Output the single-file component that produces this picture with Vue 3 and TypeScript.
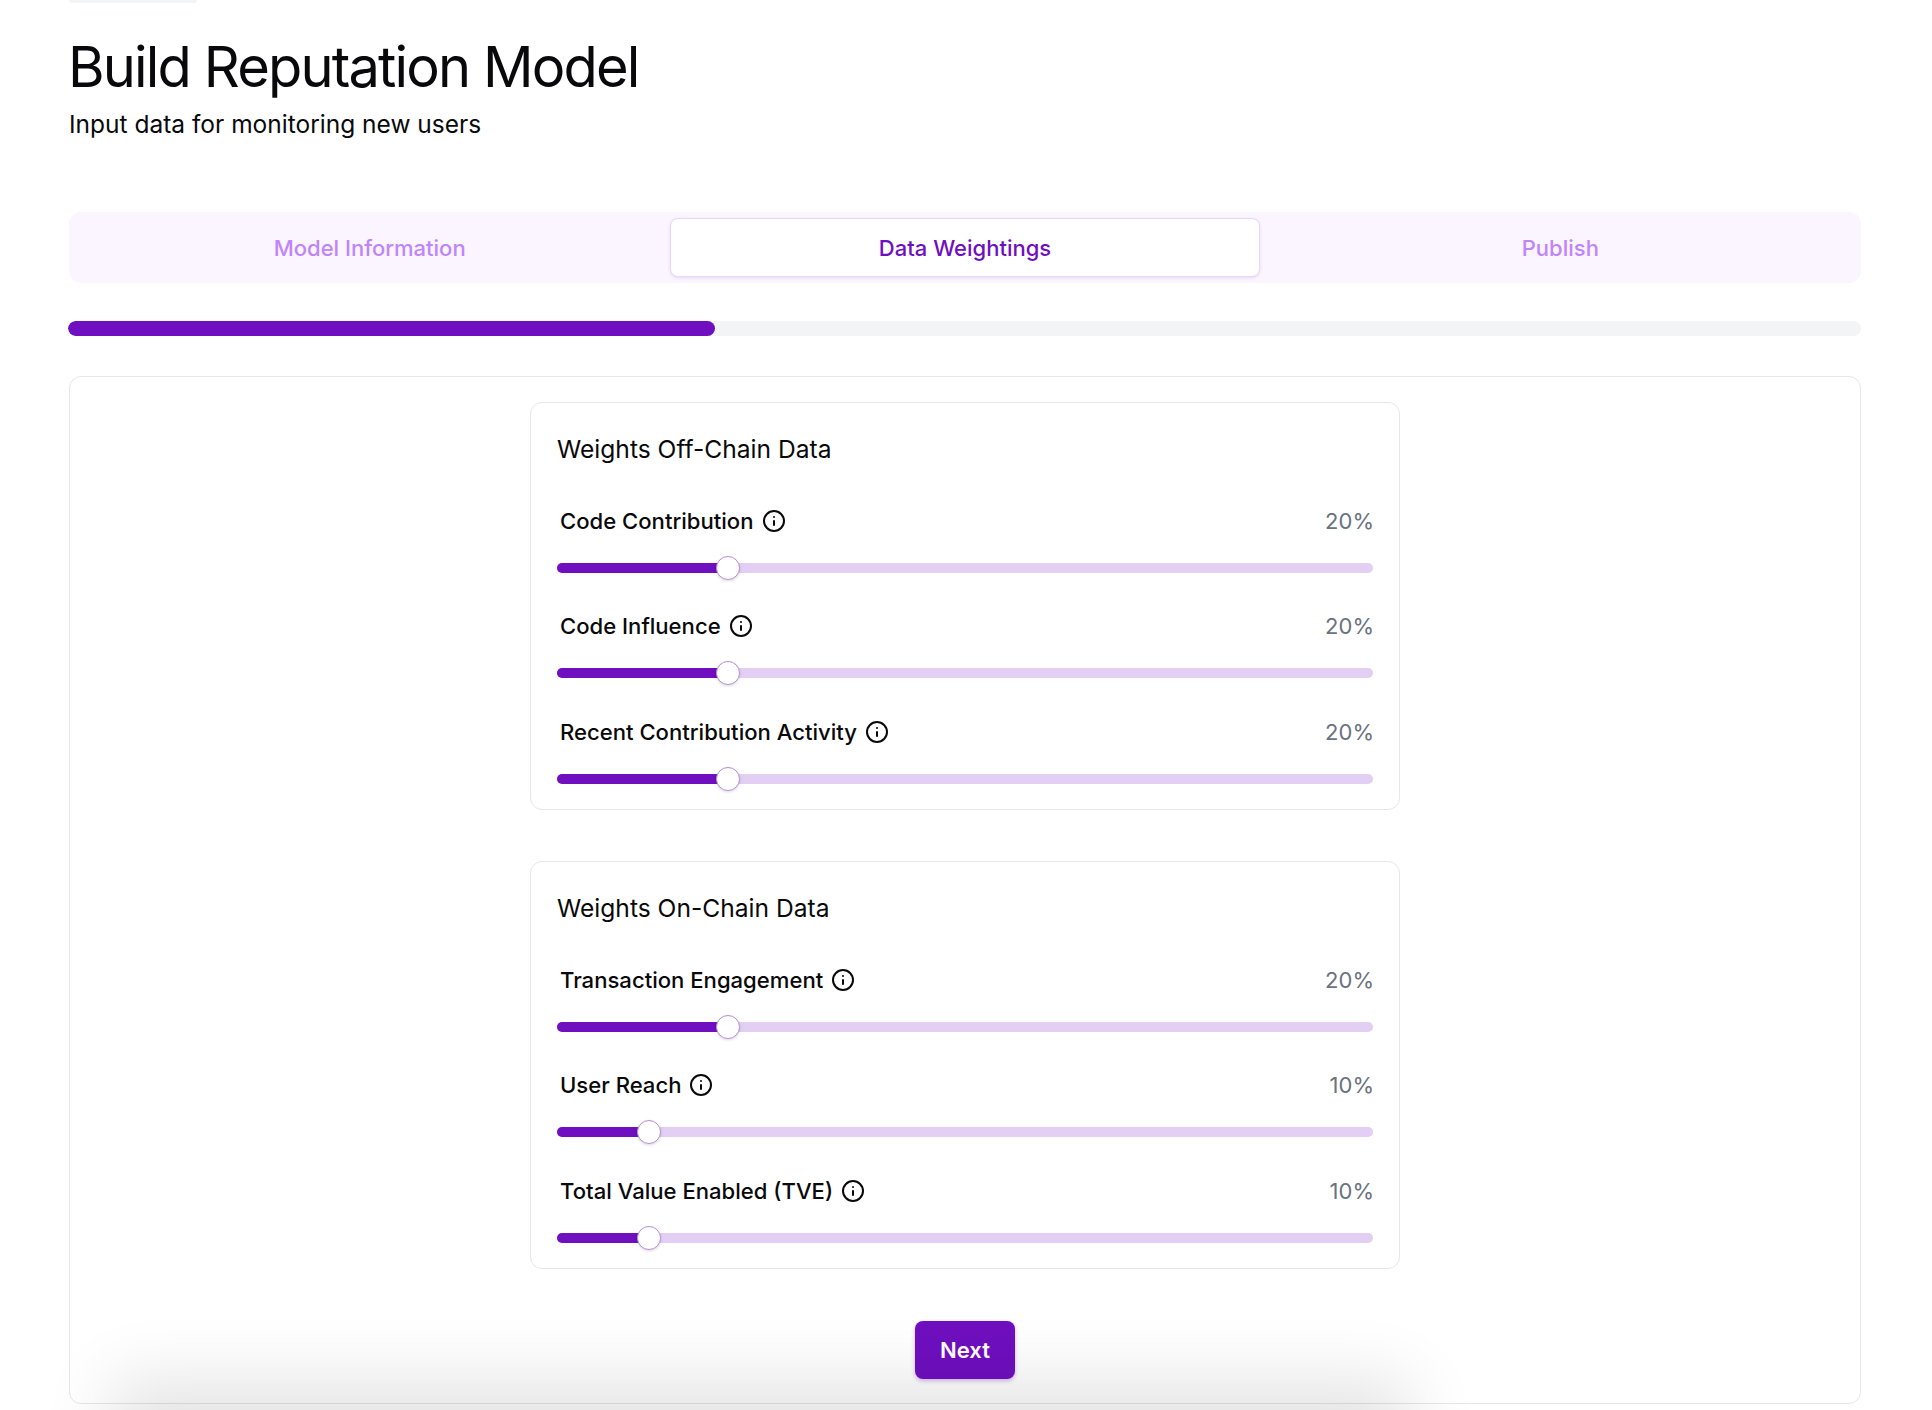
<script setup lang="ts">
interface Weight {
  label: string
  value: number
}

interface Group {
  title: string
  weights: Weight[]
}

const tabs = ['Model Information', 'Data Weightings', 'Publish']

const groups: Group[] = [
  {
    title: 'Weights Off-Chain Data',
    weights: [
      { label: 'Code Contribution', value: 20 },
      { label: 'Code Influence', value: 20 },
      { label: 'Recent Contribution Activity', value: 20 },
    ],
  },
  {
    title: 'Weights On-Chain Data',
    weights: [
      { label: 'Transaction Engagement', value: 20 },
      { label: 'User Reach', value: 10 },
      { label: 'Total Value Enabled (TVE)', value: 10 },
    ],
  },
]

// the thumb stays inside the track, so its centre runs from 13px to width - 11px
const thumbLeft = (value: number) => `calc(13px + (100% - 24px) * ${value / 100})`
</script>

<template>
  <div class="page">
    <div class="back-pill"></div>
    <h1 class="title">Build Reputation Model</h1>
    <p class="subtitle">Input data for monitoring new users</p>

    <div class="tabs">
      <div v-for="tab in tabs" :key="tab" class="tab" :class="{ active: tab === 'Data Weightings' }">
        {{ tab }}
      </div>
    </div>

    <div class="progress">
      <div class="progress-fill"></div>
    </div>

    <div class="panel">
      <section v-for="group in groups" :key="group.title" class="group">
        <h2 class="group-title">{{ group.title }}</h2>
        <div v-for="weight in group.weights" :key="weight.label" class="weight">
          <div class="weight-head">
            <span class="weight-label">
              {{ weight.label }}
              <svg class="info" viewBox="0 0 24 24" fill="none" stroke="currentColor" stroke-width="2" stroke-linecap="round" stroke-linejoin="round">
                <circle cx="12" cy="12" r="10" />
                <path d="M12 16v-4" />
                <path d="M12 8h.01" />
              </svg>
            </span>
            <span class="weight-value">{{ weight.value }}%</span>
          </div>
          <div class="slider">
            <div class="slider-fill" :style="{ width: thumbLeft(weight.value) }"></div>
            <div class="slider-thumb" :style="{ left: thumbLeft(weight.value) }"></div>
          </div>
        </div>
      </section>

      <button class="next" type="button">Next</button>
    </div>

    <div class="bottom-shadow"></div>
  </div>
</template>

<style>
html,
body {
  margin: 0;
  height: 1410px;
  overflow: hidden;
  background: #fff;
}
</style>

<style scoped>
.page {
  position: relative;
  height: 1410px;
  overflow: hidden;
  padding: 0 71px 0 69px;
  box-sizing: border-box;
  font-family: Inter, "Liberation Sans", sans-serif;
  color: #09090b;
}

.back-pill {
  width: 128px;
  height: 3px;
  background: #f3f4f6;
  border-radius: 0 0 6px 6px;
}

.title {
  margin: 32px 0 0 -1px;
  font-size: 56px;
  line-height: 64px;
  font-weight: 400;
  letter-spacing: -1.85px;
}

.subtitle {
  margin: 9px 0 0;
  font-size: 24.5px;
  line-height: 32px;
  font-weight: 400;
}

.tabs {
  display: grid;
  grid-template-columns: repeat(3, 1fr);
  gap: 6px;
  align-items: center;
  height: 71px;
  margin-top: 72px;
  padding: 0 6px;
  background: #faf5ff;
  border-radius: 12px;
}

.tab {
  display: flex;
  align-items: center;
  justify-content: center;
  height: 59px;
  font-size: 22px;
  font-weight: 500;
  color: #c084fc;
}

.tab.active {
  background: #fff;
  color: #6f0fbf;
  border: 1px solid #e9d5ff;
  border-radius: 8px;
  box-shadow: 0 1px 3px rgba(111, 15, 191, 0.12);
  box-sizing: border-box;
}

.progress {
  height: 15px;
  margin: 38px 0 0 -1px;
  background: #f3f4f6;
  border-radius: 8px;
  overflow: hidden;
}

.progress-fill {
  width: 647px;
  height: 100%;
  background: #6f0fbf;
  border-radius: 8px;
}

.panel {
  display: flex;
  flex-direction: column;
  align-items: center;
  height: 1028px;
  margin-top: 40px;
  padding-top: 25px;
  border: 1px solid #e5e7eb;
  border-radius: 12px;
  box-sizing: border-box;
}

.group {
  width: 870px;
  padding: 30px 26px 0;
  border: 1px solid #e5e7eb;
  border-radius: 12px;
  box-sizing: border-box;
}

.group + .group {
  margin-top: 51px;
}

.group-title {
  margin: 0 0 40px;
  font-size: 24.6px;
  line-height: 32px;
  font-weight: 400;
}

.weight {
  height: 105.4px;
}

.weight:last-child {
  height: 93px;
}

.weight-head {
  display: flex;
  align-items: center;
  justify-content: space-between;
  height: 32px;
  padding-left: 3px;
}

.weight-label {
  display: flex;
  align-items: center;
  gap: 8px;
  font-size: 22.1px;
  font-weight: 500;
}

.info {
  width: 24px;
  height: 24px;
}

.weight-value {
  margin-right: -1px;
  font-size: 22px;
  color: #6b7280;
}

.slider {
  position: relative;
  height: 10px;
  margin-top: 26px;
  background: #e2cff3;
  border-radius: 5px;
}

.slider-fill {
  height: 100%;
  background: #6f0fbf;
  border-radius: 5px 0 0 5px;
}

.slider-thumb {
  position: absolute;
  top: 50%;
  width: 24px;
  height: 24px;
  background: #fff;
  border: 1px solid #b78fdc;
  border-radius: 50%;
  box-sizing: border-box;
  box-shadow: 0 1px 3px rgba(0, 0, 0, 0.15);
  transform: translate(-50%, -50%);
}

.next {
  width: 100px;
  height: 58px;
  margin-top: 52px;
  background: #6f0fbf;
  color: #fff;
  font-family: inherit;
  font-size: 22px;
  font-weight: 600;
  border: none;
  border-radius: 8px;
  box-shadow: 0 2px 4px rgba(111, 15, 191, 0.3);
}

.bottom-shadow {
  position: absolute;
  left: 140px;
  bottom: -60px;
  width: 1240px;
  height: 60px;
  background: #e4e5e6;
  box-shadow: 0 0 70px 30px rgba(0, 0, 0, 0.11);
  pointer-events: none;
}
</style>
